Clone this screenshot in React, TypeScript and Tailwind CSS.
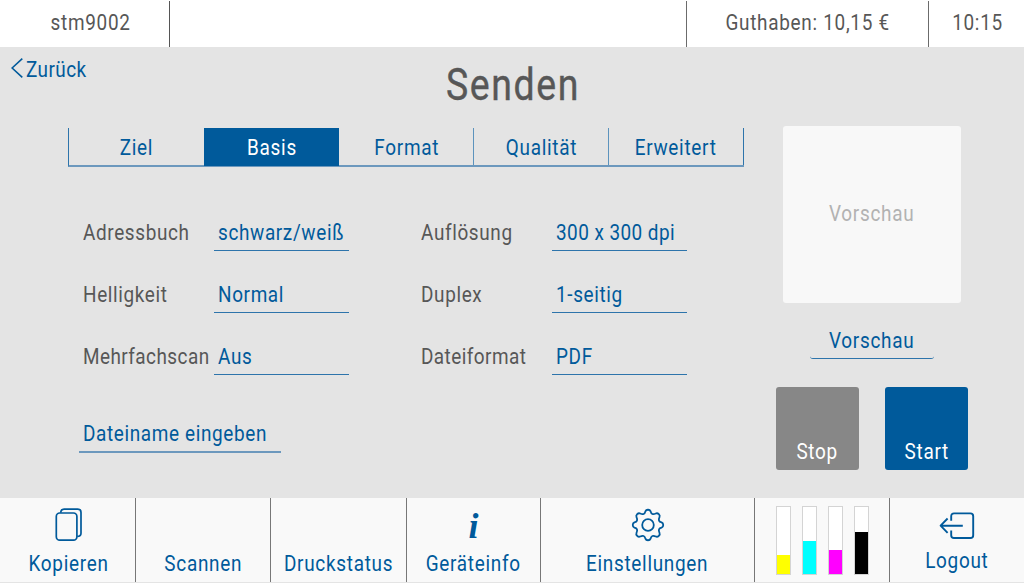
import type { ReactNode } from "react";
import clsx from "clsx";

function Text({ children, className }: { children: ReactNode; className?: string }) {
  return (
    <span
      className={clsx(
        "inline-block whitespace-nowrap leading-6",
        className ?? "origin-center scale-x-[0.86] tracking-[0.038em]",
      )}
    >
      {children}
    </span>
  );
}

const LEFT = "origin-left scale-x-[0.86] tracking-[0.034em]";
const LEFT_TIGHT = "origin-left scale-x-[0.86] tracking-[0.024em]";

const tabs = ["Ziel", "Basis", "Format", "Qualität", "Erweitert"];

const settings = [
  [
    { label: "Adressbuch", value: "schwarz/weiß" },
    { label: "Helligkeit", value: "Normal" },
    { label: "Mehrfachscan", value: "Aus" },
  ],
  [
    { label: "Auflösung", value: "300 x 300 dpi" },
    { label: "Duplex", value: "1-seitig" },
    { label: "Dateiformat", value: "PDF" },
  ],
];

const toners = [
  { fill: "h-[19px] bg-[#ffff00]" },
  { fill: "h-[33px] bg-[#00ffff]" },
  { fill: "h-[24px] bg-[#ff00ff]" },
  { fill: "h-[42px] bg-black" },
];

function CopyIcon() {
  return (
    <svg width="28" height="34" viewBox="0 0 28 34" fill="none" stroke="#005a9b" strokeWidth="1.7">
      <rect x="1.3" y="5" width="20.6" height="27.2" rx="3.4" />
      <path d="M5.7 4.8C5.9 2.4 7 1.2 9.1 1.2H22.7C24.8 1.2 26 2.4 26 4.5V25.2C26 27.2 24.5 28.4 22.2 28.4" />
    </svg>
  );
}

function GearIcon() {
  return (
    <svg width="34" height="34" viewBox="-17 -17 34 34" fill="none" stroke="#005a9b" strokeWidth="1.8" strokeLinejoin="round">
      <circle r="5.8" />
      <path d="M-2.6 -13.6C-1.8 -15.8 1.8 -15.8 2.6 -13.6C3.2 -10.8 5 -10.2 7.8 -11.5C9.9 -12.5 12.5 -9.9 11.5 -7.8C10.2 -5 10.8 -3.2 13.6 -2.6C15.8 -1.8 15.8 1.8 13.6 2.6C10.8 3.2 10.2 5 11.5 7.8C12.5 9.9 9.9 12.5 7.8 11.5C5 10.2 3.2 10.8 2.6 13.6C1.8 15.8 -1.8 15.8 -2.6 13.6C-3.2 10.8 -5 10.2 -7.8 11.5C-9.9 12.5 -12.5 9.9 -11.5 7.8C-10.2 5 -10.8 3.2 -13.6 2.6C-15.8 1.8 -15.8 -1.8 -13.6 -2.6C-10.8 -3.2 -10.2 -5 -11.5 -7.8C-12.5 -9.9 -9.9 -12.5 -7.8 -11.5C-5 -10.2 -3.2 -10.8 -2.6 -13.6Z" />
    </svg>
  );
}

function LogoutIcon() {
  return (
    <svg width="36" height="28" viewBox="0 0 36 28" fill="none" stroke="#005a9b" strokeWidth="1.9" strokeLinejoin="round">
      <path d="M12.2 8.8V4.2C12.2 2.4 13.2 1.4 15 1.4H31.4C33.2 1.4 34.2 2.4 34.2 4.2V23.2C34.2 25 33.2 26 31.4 26H15C13.2 26 12.2 25 12.2 23.2V18.6" />
      <path d="M23.8 13.7H1.6M8.6 6.5L1.6 13.7L8.6 20.9" />
    </svg>
  );
}

function FooterCell({ label, icon, className }: { label: string; icon?: ReactNode; className: string }) {
  return (
    <button className={clsx("flex flex-col items-center bg-[#f9f9f9] text-[#005a9b]", className)}>
      <span className="flex h-[54px] items-center justify-center">{icon}</span>
      <Text>{label}</Text>
    </button>
  );
}

export default function App() {
  return (
    <div className="flex h-[584px] w-[1024px] flex-col overflow-hidden bg-[#e4e4e4] font-['Roboto',sans-serif] text-[22px] text-[#575757]">
      <header className="flex h-[47px] bg-white pt-px">
        <div className="flex w-[170px] justify-center border-r border-[#555] pt-[10px] pl-3">
          <Text>stm9002</Text>
        </div>
        <div className="w-[517px] border-r border-[#6b6b6b]" />
        <div className="flex w-[242px] justify-center border-r border-[#6b6b6b] pt-[10px]">
          <Text>Guthaben: 10,15 €</Text>
        </div>
        <div className="flex flex-1 justify-center pt-[10px] pl-px">
          <Text>10:15</Text>
        </div>
      </header>

      <div className="grid h-[79px] grid-cols-[200px_1fr_200px]">
        <button className="flex items-start pt-[11px] pl-[11px] text-[#005a9b]">
          <svg width="12" height="20" viewBox="0 0 12 20" className="mr-[3px]" fill="none" stroke="#005a9b" strokeWidth="1.6">
            <path d="M11.3 0.6L1.1 10L11.3 19.4" />
          </svg>
          <Text className={LEFT_TIGHT}>Zurück</Text>
        </button>
        <h1 className="flex justify-center pt-[15px] pl-[3px] text-[43.5px]">
          <span className="inline-block origin-center scale-x-[0.86] leading-[48px] font-normal tracking-[0.044em] [-webkit-text-stroke:0.4px_#575757]">
            Senden
          </span>
        </h1>
      </div>

      <main className="flex h-[372px]">
        <section className="w-[776px] pt-[2px] pl-[68px]">
          <nav className="flex h-[39px] w-[676px] border-b-2 border-l border-b-[#6c98bd] border-l-[#2d74ab]">
            {tabs.map((tab, i) => (
              <button
                key={tab}
                className={clsx(
                  "flex w-[135px] items-center justify-center",
                  i === 1 ? "h-[38px] bg-[#005a9b] pt-[2px] text-white" : "pt-[3px] text-[#005a9b]",
                  i > 1 && i < 4 && "border-r border-[#5c93bd] pl-px",
                  i === 4 && "border-r border-[#2d74ab]",
                )}
              >
                <Text>{tab}</Text>
              </button>
            ))}
          </nav>

          <div className="flex pt-[53px] pl-[11px]">
            {settings.map((column, c) => (
              <div key={c} className="w-[338px]">
                {column.map(({ label, value }) => (
                  <div key={label} className="flex h-[62px]">
                    <div className="flex w-[135px] pt-px pl-1">
                      <Text className={label.length > 10 ? LEFT_TIGHT : LEFT}>{label}</Text>
                    </div>
                    <button className="flex h-[31px] w-[135px] border-b border-[#2d74ab] pt-px pl-1 text-[#005a9b]">
                      <Text className={value.length > 12 ? LEFT_TIGHT : LEFT}>{value}</Text>
                    </button>
                  </div>
                ))}
              </div>
            ))}
          </div>

          <button className="mt-[15px] ml-[11px] flex h-[32px] w-[202px] items-start border-b-2 border-[#6c98bd] pt-px pl-1 text-[#005a9b]">
            <Text className={LEFT}>Dateiname eingeben</Text>
          </button>
        </section>

        <aside className="flex w-[192px] flex-col items-center">
          <div className="flex h-[177px] w-[178px] items-center justify-center rounded-[3px] bg-[#f8f8f8] pb-[2px] text-[#b2b2b2]">
            <Text>Vorschau</Text>
          </div>
          <button className="mt-[26px] flex h-[30px] w-[124px] justify-center rounded-[3px] border-b border-[#2d74ab] text-[#005a9b]">
            <Text>Vorschau</Text>
          </button>
          <div className="mt-[28px] flex w-full justify-between text-white">
            <button className="flex h-[83px] w-[83px] items-end justify-center rounded-[3px] bg-[#878787] pb-[6px]">
              <Text>Stop</Text>
            </button>
            <button className="flex h-[83px] w-[83px] items-end justify-center rounded-[3px] bg-[#005a9b] pb-[6px]">
              <Text>Start</Text>
            </button>
          </div>
        </aside>
      </main>

      <footer className="flex h-[86px] border-b border-white bg-[#e4e4e4] pb-px">
        <FooterCell label="Kopieren" icon={<CopyIcon />} className="w-[136px] border-r border-[#777] pl-[2px]" />
        <FooterCell label="Scannen" className="w-[135px] border-r border-[#777]" />
        <FooterCell label="Druckstatus" className="w-[136px] border-r border-[#777]" />
        <FooterCell
          label="Geräteinfo"
          icon={<i className="pt-[2px] font-['Liberation_Serif',serif] text-[36px] leading-9 font-bold">i</i>}
          className="w-[134px] border-r border-[#777]"
        />
        <FooterCell label="Einstellungen" icon={<GearIcon />} className="w-[214px] border-r border-[#777]" />
        <div className="flex w-[135px] gap-[11px] border-r border-[#777] bg-[#f9f9f9] pt-2 pl-[21px]">
          {toners.map(({ fill }) => (
            <div key={fill} className="flex h-[69px] w-[15px] items-end border border-[#d4d4d4] bg-white">
              <div className={clsx("w-full", fill)} />
            </div>
          ))}
        </div>
        <button className="flex flex-1 flex-col items-center bg-[#f9f9f9] text-[#005a9b]">
          <span className="flex h-[51px] items-end pb-[9px]">
            <LogoutIcon />
          </span>
          <Text>Logout</Text>
        </button>
      </footer>
    </div>
  );
}
